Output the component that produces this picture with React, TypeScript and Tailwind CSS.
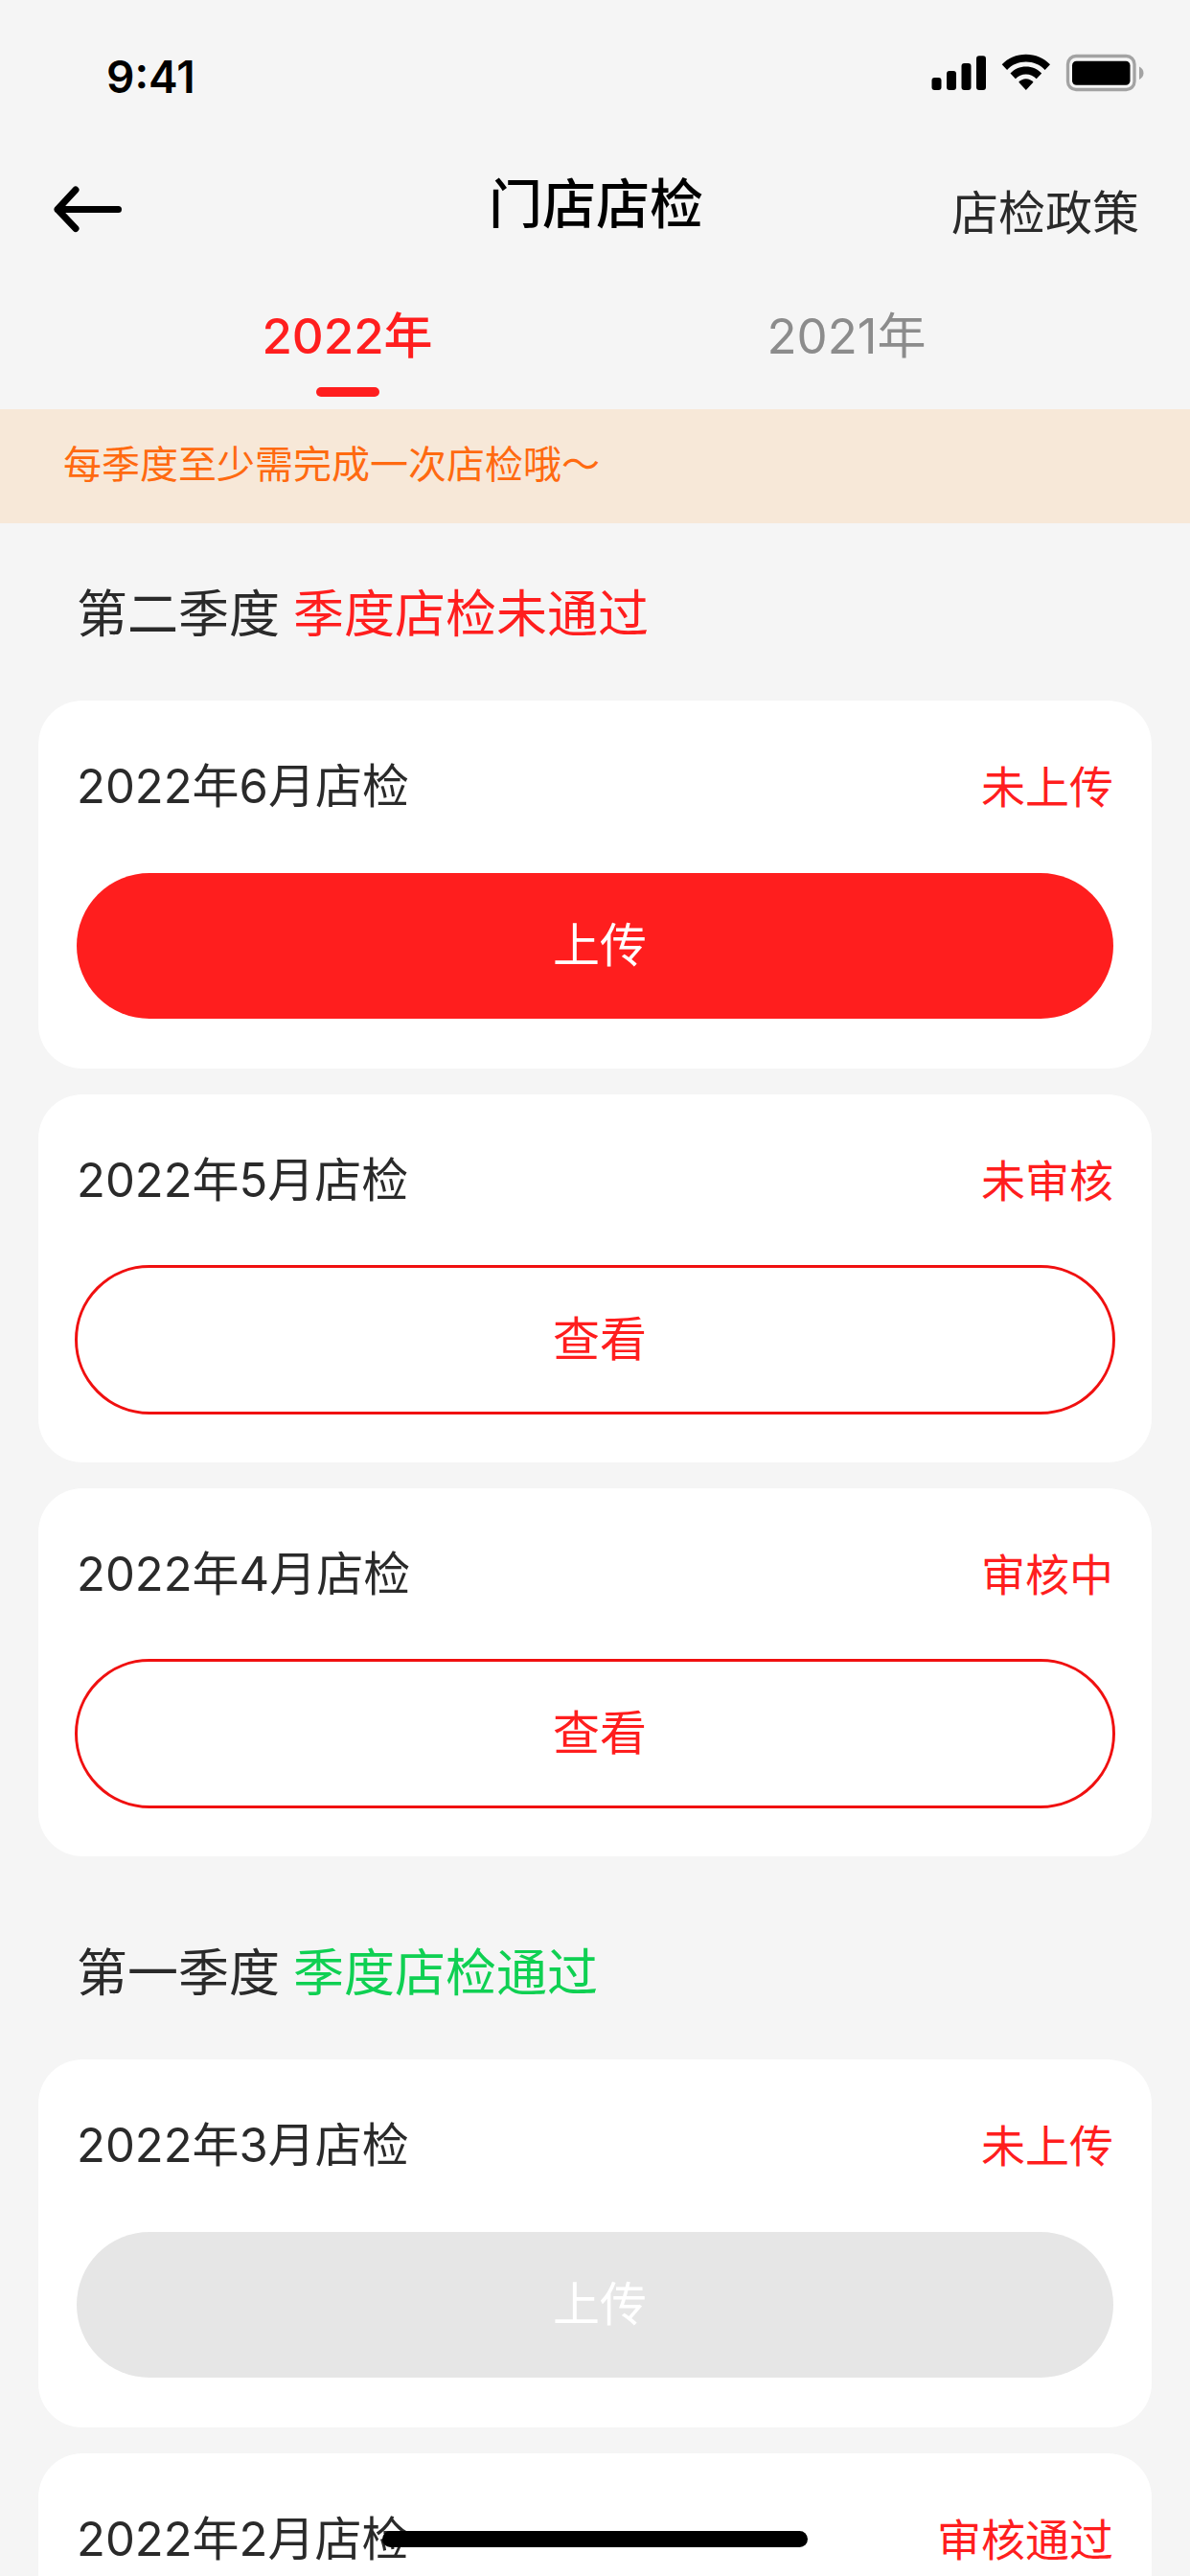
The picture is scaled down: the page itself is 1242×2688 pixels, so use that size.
import { useState } from "react";
import clsx from "clsx";

type Inspection = {
  month: string;
  status: string;
  action?: "upload" | "view";
  disabled?: boolean;
};

type Quarter = {
  name: string;
  result: string;
  passed: boolean;
  inspections: Inspection[];
};

const YEARS = ["2022年", "2021年"];

const QUARTERS: Quarter[] = [
  {
    name: "第二季度",
    result: "季度店检未通过",
    passed: false,
    inspections: [
      { month: "2022年6月店检", status: "未上传", action: "upload" },
      { month: "2022年5月店检", status: "未审核", action: "view" },
      { month: "2022年4月店检", status: "审核中", action: "view" },
    ],
  },
  {
    name: "第一季度",
    result: "季度店检通过",
    passed: true,
    inspections: [
      { month: "2022年3月店检", status: "未上传", action: "upload", disabled: true },
      { month: "2022年2月店检", status: "审核通过" },
    ],
  },
];

function StatusBar() {
  return (
    <div className="flex h-[132px] shrink-0 items-center justify-between pt-5 pr-12 pl-[111px]">
      <span className="pt-2 text-[46px] leading-[56px] font-semibold text-black">9:41</span>
      <svg className="h-10 w-[222px]" viewBox="0 0 222 40" fill="none" aria-hidden="true">
        <g fill="#000">
          <rect x="0.5" y="25" width="10" height="13" rx="3" />
          <rect x="16" y="18" width="10" height="20" rx="3" />
          <rect x="31.5" y="10" width="10" height="28" rx="3" />
          <rect x="47" y="2.3" width="10" height="35.7" rx="3" />
          <path d="M73.7 11.3C80 4.6 89 .8 98.8 .8s18.8 3.8 25.2 10.5l-5.4 5.6C113.5 11.5 106.5 8.5 98.8 8.5s-14.7 3-19.7 8.4z" />
          <path d="M82.5 20.6c4.2-4.4 9.9-7 16.3-7s12.1 2.6 16.4 7l-5.5 5.6c-2.9-3-6.7-4.8-10.9-4.8s-8 1.8-10.9 4.8z" />
          <path d="M91.2 29.8c2-2.2 4.6-3.5 7.6-3.5s5.7 1.3 7.7 3.5L98.8 38z" />
        </g>
        <rect x="142.5" y="2.5" width="69.5" height="35" rx="8.5" stroke="#a3a3a3" strokeWidth="3.3" />
        <rect x="147" y="7.8" width="60.5" height="25" rx="4.5" fill="#000" />
        <path d="M217 13.5c2.8 1.2 4.5 3.7 4.5 6.7s-1.7 5.5-4.5 6.7z" fill="#a3a3a3" />
      </svg>
    </div>
  );
}

function NavBar() {
  return (
    <header className="grid h-[172px] shrink-0 grid-cols-[1fr_auto_1fr] items-center pr-[53px] pl-[55px]">
      <button type="button" aria-label="返回" className="justify-self-start">
        <svg className="h-[50px] w-[74px]" viewBox="0 0 74 50" fill="none" aria-hidden="true">
          <path
            d="M68.5 25.5H5M24 5 5 25.5 24 45.5"
            stroke="#000"
            strokeWidth="7"
            strokeLinecap="round"
            strokeLinejoin="round"
          />
        </svg>
      </button>
      <h1 className="pb-2.5 text-[56px] leading-[72px] font-medium text-black">门店店检</h1>
      <a href="#policy" className="justify-self-end pt-2.5 text-[49px] leading-[64px]">
        店检政策
      </a>
    </header>
  );
}

function InspectionCard({ month, status, action, disabled }: Inspection) {
  return (
    <li className="rounded-[46px] bg-white px-10 pt-[58px] pb-[52px]">
      <div className="flex items-center justify-between leading-[64px]">
        <h3 className="text-[49px]">{month}</h3>
        <span className="text-[46px] text-[#ff1e1e]">{status}</span>
      </div>
      {action && (
        <button
          type="button"
          disabled={disabled}
          className={clsx(
            "mt-[58px] h-[152px] w-full rounded-full pl-2.5 text-[49px] leading-[64px]",
            action === "view" && "text-[#ff1e1e] outline-[3px] -outline-offset-1 outline-[#f01010]",
            action === "upload" && (disabled ? "bg-[#e6e6e6] text-white" : "bg-[#ff1e1e] text-white"),
          )}
        >
          {action === "upload" ? "上传" : "查看"}
        </button>
      )}
    </li>
  );
}

export default function App() {
  const [year, setYear] = useState(YEARS[0]);

  return (
    <div
      lang="zh-CN"
      className="flex h-screen flex-col overflow-hidden bg-[#f5f5f5] font-['Inter','Noto_Sans_CJK_SC',sans-serif] text-[#2a2a2a]"
    >
      <StatusBar />
      <NavBar />

      <div role="tablist" className="grid shrink-0 grid-cols-2 pt-[15px] pr-[98px] pb-[13px] pl-[102px]">
        {YEARS.map((y) => (
          <button
            key={y}
            type="button"
            role="tab"
            aria-selected={y === year}
            onClick={() => setYear(y)}
            className={clsx(
              "flex flex-col items-center gap-[21px] text-[51px] leading-[64px]",
              y === year ? "font-medium text-[#ff1e1e]" : "text-[#8c8c8c]",
            )}
          >
            {y}
            <span className={clsx("h-2.5 w-[66px] rounded-full", y === year && "bg-[#ff1e1e]")} />
          </button>
        ))}
      </div>

      <p className="shrink-0 bg-[#f7e8d8] px-[66px] pt-[34px] pb-[37px] text-[40px] leading-[48px] text-[#ff6a10]">
        每季度至少需完成一次店检哦～
      </p>

      <main className="min-h-0 flex-1 overflow-y-auto px-10 [scrollbar-width:none]">
        {QUARTERS.map((q) => (
          <section key={q.name} className="mb-[27px]">
            <h2 className="flex h-[185px] items-center gap-[14px] px-10 pt-1 text-[53px] leading-[64px]">
              {q.name}
              <span className={q.passed ? "text-[#0fd052]" : "text-[#ff1e1e]"}>{q.result}</span>
            </h2>
            <ul className="flex flex-col gap-[27px]">
              {q.inspections.map((item) => (
                <InspectionCard key={item.month} {...item} />
              ))}
            </ul>
          </section>
        ))}
      </main>

      {/* Home indicator */}
      <div className="fixed bottom-[30px] left-1/2 h-[17px] w-[444px] -translate-x-1/2 rounded-full bg-black" />
    </div>
  );
}
